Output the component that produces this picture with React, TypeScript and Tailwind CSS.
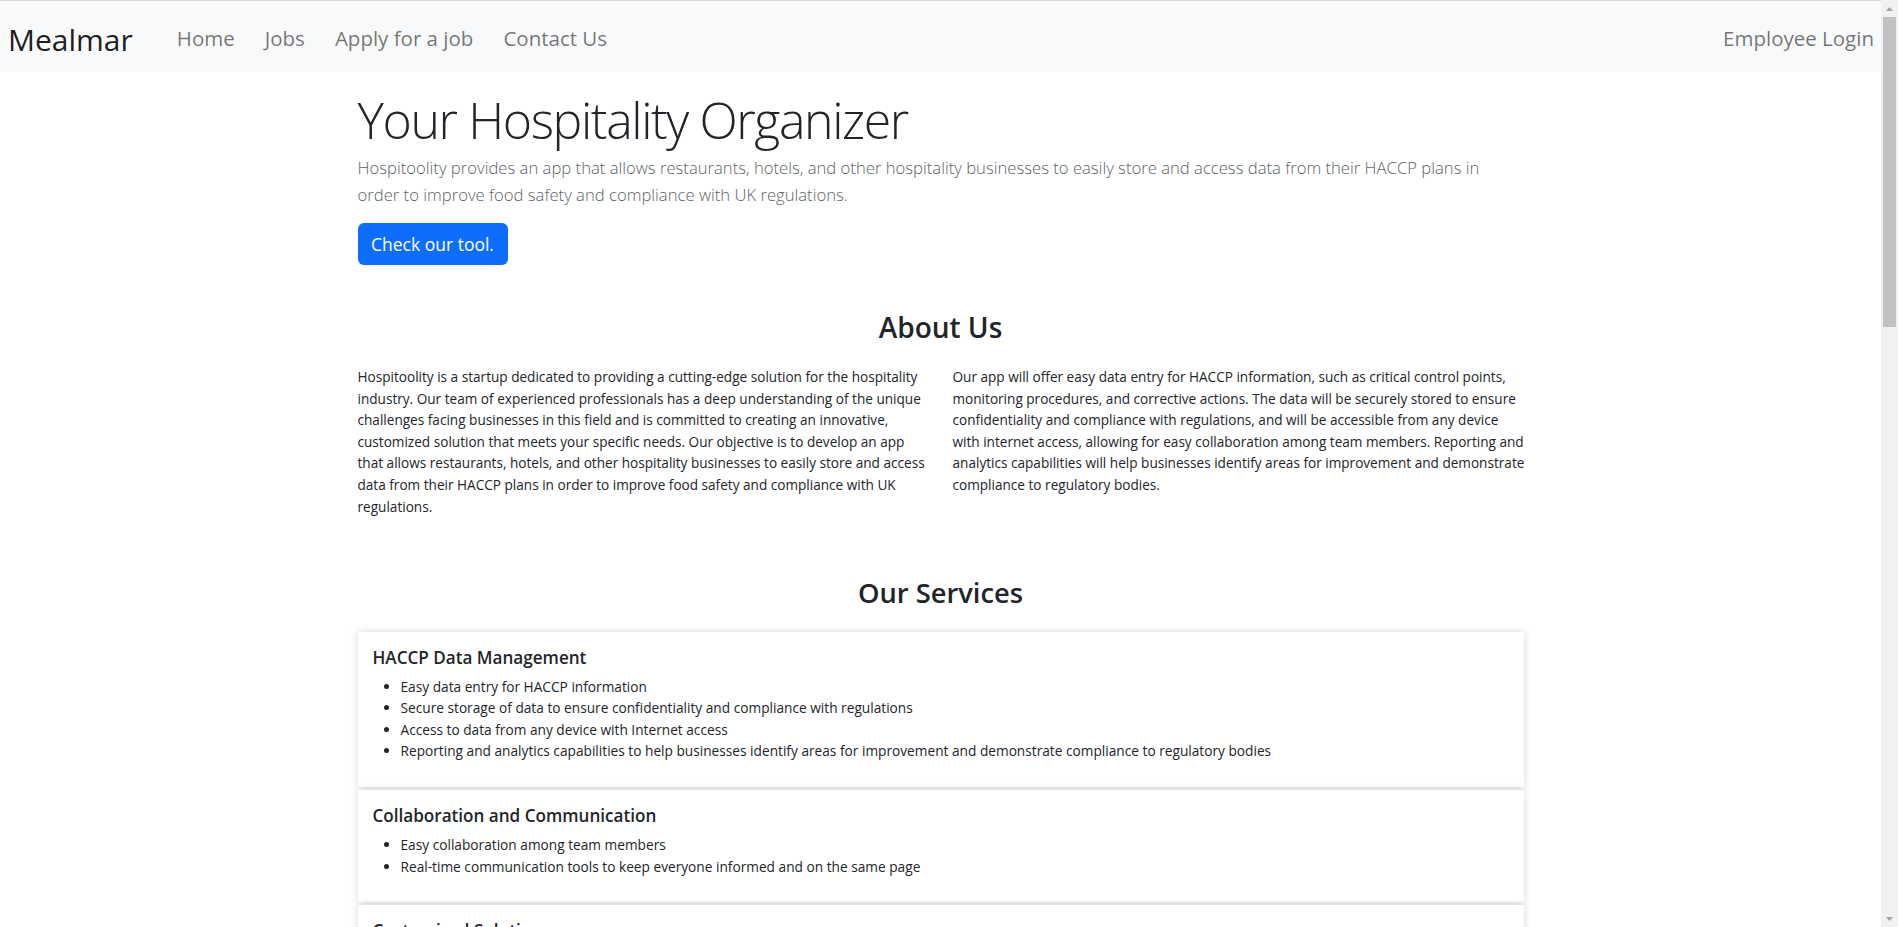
import React from "react";

const services = [
  {
    title: "HACCP Data Management",
    items: [
      "Easy data entry for HACCP information",
      "Secure storage of data to ensure confidentiality and compliance with regulations",
      "Access to data from any device with Internet access",
      "Reporting and analytics capabilities to help businesses identify areas for improvement and demonstrate compliance to regulatory bodies",
    ],
  },
  {
    title: "Collaboration and Communication",
    items: [
      "Easy collaboration among team members",
      "Real-time communication tools to keep everyone informed and on the same page",
    ],
  },
  {
    title: "Customized Solutions",
    items: [
      "Tailored solutions to meet the specific needs of your business",
      "Dedicated support from our team of experienced professionals",
    ],
  },
];

export default function App() {
  return (
    <div className="flex h-[927px] w-[1898px] overflow-hidden bg-white font-['Open_Sans',sans-serif] text-[#212529]">
      <div className="min-w-0 flex-1 overflow-hidden">
        <nav className="flex h-[72px] items-center border-t border-[#d9d9d9] bg-[#f8f9fa] pl-[8px] pr-[7px]">
          <a className="mr-[44px] pt-[6px] text-[30px] leading-none text-black/90">Mealmar</a>
          <ul className="flex gap-[30px] pt-[4px] text-[20.5px] leading-none text-black/55">
            <li>Home</li>
            <li>Jobs</li>
            <li>Apply for a job</li>
            <li>Contact Us</li>
          </ul>
          <a className="ml-auto pt-[4px] text-[20.5px] leading-none text-black/55">Employee Login</a>
        </nav>

        <main className="mx-auto w-[1166px]">
          <h1 className="mt-[15px] text-[50px] font-light leading-[67px] tracking-[-1.4px] text-[#212529]">
            Your Hospitality Organizer
          </h1>
          <p className="text-[16.66px] font-light leading-[27px] text-[#5c636a]">
            Hospitoolity provides an app that allows restaurants, hotels, and other hospitality businesses to easily
            store and access data from their HACCP plans in
            <br />
            order to improve food safety and compliance with UK regulations.
          </p>
          <button className="mt-[15px] flex h-[42px] w-[150px] items-center justify-center rounded-[6px] bg-[#0d6efd] text-[17.5px] text-white">
            Check our tool.
          </button>

          <h2 className="mt-[43px] text-center text-[28px] font-semibold leading-[38px]">About Us</h2>
          <div className="mt-[20px] grid grid-cols-2 gap-x-[24px] whitespace-nowrap text-[13.6px] leading-[21.6px]">
            <p>
              Hospitoolity is a startup dedicated to providing a cutting-edge solution for the hospitality
              <br />
              industry. Our team of experienced professionals has a deep understanding of the unique
              <br />
              challenges facing businesses in this field and is committed to creating an innovative,
              <br />
              customized solution that meets your specific needs. Our objective is to develop an app
              <br />
              that allows restaurants, hotels, and other hospitality businesses to easily store and access
              <br />
              data from their HACCP plans in order to improve food safety and compliance with UK
              <br />
              regulations.
            </p>
            <p>
              Our app will offer easy data entry for HACCP information, such as critical control points,
              <br />
              monitoring procedures, and corrective actions. The data will be securely stored to ensure
              <br />
              confidentiality and compliance with regulations, and will be accessible from any device
              <br />
              with internet access, allowing for easy collaboration among team members. Reporting and
              <br />
              analytics capabilities will help businesses identify areas for improvement and demonstrate
              <br />
              compliance to regulatory bodies.
            </p>
          </div>

          <h2 className="mt-[57px] text-center text-[27.3px] font-semibold leading-[38px]">Our Services</h2>
          <div className="mt-[19.5px] flex flex-col gap-[3px]">
            {services.map((s) => (
              <div
                key={s.title}
                className="bg-white px-[15px] pt-[14px] pb-[25px] shadow-[0_0_8px_rgba(0,0,0,0.16)]"
              >
                <h5 className="text-[17.1px] font-semibold leading-[24px]">{s.title}</h5>
                <ul className="mt-[6px] list-disc pl-[28px] text-[13.7px] leading-[21.6px]">
                  {s.items.map((it) => (
                    <li key={it}>{it}</li>
                  ))}
                </ul>
              </div>
            ))}
          </div>
        </main>
      </div>

      <div className="flex w-[17px] flex-col bg-[#f1f1f1]">
        <div className="flex h-[17px] items-center justify-center">
          <svg width="7" height="4" viewBox="0 0 7 4">
            <path d="M0 4 L3.5 0 L7 4 Z" fill="#a3a3a3" />
          </svg>
        </div>
        <div className="mx-[2px] h-[310px] bg-[#c1c1c1]" />
        <div className="flex-1" />
        <div className="flex h-[17px] items-center justify-center">
          <svg width="7" height="4" viewBox="0 0 7 4">
            <path d="M0 0 L3.5 4 L7 0 Z" fill="#a3a3a3" />
          </svg>
        </div>
      </div>
    </div>
  );
}
